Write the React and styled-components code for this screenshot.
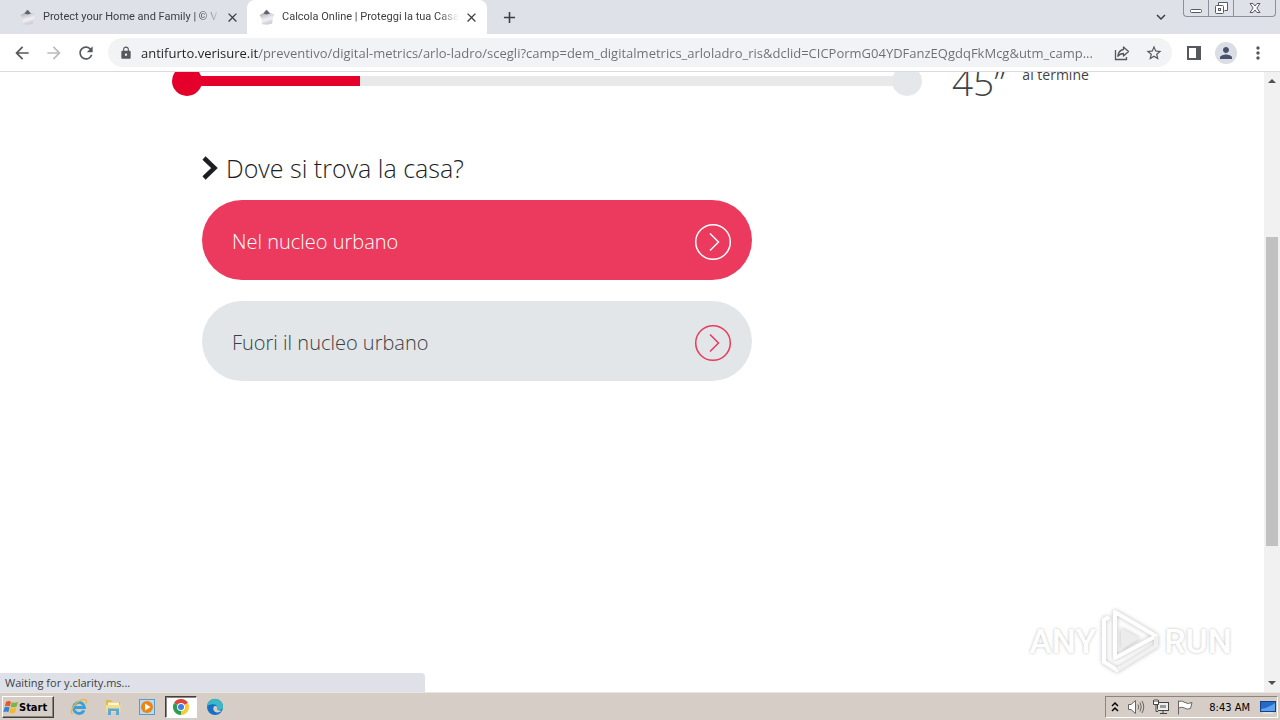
import styled, { createGlobalStyle, css } from "styled-components";
import { useState } from "react";
import {
  MdArrowBack,
  MdArrowForward,
  MdRefresh,
  MdLock,
  MdStarBorder,
  MdPerson,
  MdMoreVert,
  MdClose,
  MdAdd,
  MdExpandMore,
} from "react-icons/md";

const tabs = [
  { id: "home", title: "Protect your Home and Family | © V" },
  { id: "calcola", title: "Calcola Online | Proteggi la tua Casa" },
];

const options = ["Nel nucleo urbano", "Fuori il nucleo urbano"];

const StarLogo = () => (
  <svg width="16" height="16" viewBox="0 0 16 16" aria-hidden="true">
    <defs>
      <linearGradient id="star" x1="0" y1="0" x2="0.3" y2="1">
        <stop offset="0" stopColor="#96969f" />
        <stop offset="0.45" stopColor="#cfcfd6" />
        <stop offset="0.75" stopColor="#f2f2f5" />
        <stop offset="1" stopColor="#d2d2d8" />
      </linearGradient>
    </defs>
    <path
      d="M7.500 1.500 10.500 4.500 14.500 6 13 10 12.500 14 8 15 3.500 14.500 3.500 10 1.500 6.500 5 4.500Z"
      fill="url(#star)"
      stroke="url(#star)"
      strokeWidth="1.500"
      strokeLinejoin="round"
    />
    <path d="M7.500 1 11 4.500 7.500 5.500 4.500 4.500Z" fill="#62626f" />
  </svg>
);

const ArrowCircle = () => (
  <svg width="38" height="38" viewBox="0 0 38 38" fill="none" stroke="currentColor" aria-hidden="true">
    <circle cx="19" cy="19" r="17.300" strokeWidth="1.500" />
    <path d="M16 10.500 24.500 19 16 27.500" strokeWidth="1.500" />
  </svg>
);

const WindowButtons = () => (
  <SCWindowButtons>
    <button type="button" aria-label="Minimize">
      <svg width="12" height="14" viewBox="0 0 12 14" fill="none" stroke="#555a64">
        <rect x="0.500" y="8.500" width="11" height="3" rx="1" fill="#fff" />
      </svg>
    </button>
    <button type="button" aria-label="Restore">
      <svg width="13" height="14" viewBox="0 0 13 14" fill="none" stroke="#555a64">
        <path d="M3.500 4V1.500H12.500V9.500H9.500" fill="#fff" />
        <rect x="0.500" y="4.500" width="8" height="8" rx="1" fill="#fff" />
        <rect x="3.500" y="7.500" width="2" height="2" />
      </svg>
    </button>
    <button type="button" aria-label="Close">
      <svg width="12" height="12" viewBox="0 0 12 12" stroke="#555a64">
        <path
          d="M1 1.500H4L6 4 8 1.500H11L7.800 6 11 10.500H8L6 8 4 10.500H1L4.200 6Z"
          fill="#fff"
        />
      </svg>
    </button>
  </SCWindowButtons>
);

const Browser = () => {
  const [active, setActive] = useState("calcola");
  const [url, setUrl] = useState(
    "antifurto.verisure.it/preventivo/digital-metrics/arlo-ladro/scegli?camp=dem_digitalmetrics_arloladro_ris&dclid=CICPormG04YDFanzEQgdqFkMcg&utm_camp..."
  );

  return (
    <header>
      <SCTabStrip>
        {tabs.map((tab) => (
          <SCTab key={tab.id} $active={tab.id === active}>
            <button type="button" className="title" onClick={() => setActive(tab.id)}>
              <StarLogo />
              <span>{tab.title}</span>
            </button>
            <button type="button" className="close" aria-label="Close tab">
              <MdClose size={15} />
            </button>
          </SCTab>
        ))}
        <SCStripButton type="button" aria-label="New tab">
          <MdAdd size={19} />
        </SCStripButton>
        <SCStripEnd>
          <SCStripButton type="button" aria-label="Search tabs">
            <MdExpandMore size={18} />
          </SCStripButton>
          <WindowButtons />
        </SCStripEnd>
      </SCTabStrip>
      <SCToolbar>
        <SCIconButton type="button" aria-label="Back">
          <MdArrowBack size={20} />
        </SCIconButton>
        <SCIconButton type="button" aria-label="Forward" $faded>
          <MdArrowForward size={20} />
        </SCIconButton>
        <SCIconButton type="button" aria-label="Reload">
          <MdRefresh size={20} />
        </SCIconButton>
        <SCAddress>
          <MdLock size={14} />
          <input
            aria-label="Address"
            value={url}
            onChange={(e) => setUrl(e.target.value)}
            spellCheck="false"
          />
          <SCIconButton type="button" aria-label="Share">
            <svg width="16" height="16" viewBox="0 0 16 16" fill="none" stroke="currentColor" strokeWidth="1.300">
              <path d="M1.500 5V14.500H12.500V12" />
              <path d="M9.500 2 14.500 6.500 9.500 11V8.500C7 8.500 5.200 9.300 3.800 11.300 4.200 7.500 6 5 9.500 4.500Z" strokeLinejoin="round" />
            </svg>
          </SCIconButton>
          <SCIconButton type="button" aria-label="Bookmark">
            <MdStarBorder size={18} />
          </SCIconButton>
        </SCAddress>
        <SCIconButton type="button" aria-label="Side panel">
          <svg width="14" height="14" viewBox="0 0 14 14">
            <path d="M0 0H14V14H0Z M2 2V12H9V2Z" fill="currentColor" fillRule="evenodd" />
          </svg>
        </SCIconButton>
        <SCIconButton type="button" aria-label="Profile">
          <SCAvatar>
            <MdPerson size={18} />
          </SCAvatar>
        </SCIconButton>
        <SCIconButton type="button" aria-label="Menu">
          <MdMoreVert size={20} />
        </SCIconButton>
      </SCToolbar>
    </header>
  );
};

const Quiz = () => {
  const [selected, setSelected] = useState(0);

  return (
    <SCQuiz>
      <div className="top">
        <SCProgress>
          <i className="dot done" />
          <i className="bar" />
          <i className="dot" />
        </SCProgress>
        <SCTimer>
          <strong>45”</strong>
          <span>al termine</span>
        </SCTimer>
      </div>
      <div className="question">
        <h1>
          <svg width="16" height="24" viewBox="0 0 16 24" fill="none" aria-hidden="true">
            <path d="M2 2 12.500 12 2 22" stroke="#1d1e24" strokeWidth="4.500" />
          </svg>
          Dove si trova la casa?
        </h1>
        {options.map((option, i) => (
          <SCOption key={option} type="button" $selected={i === selected} onClick={() => setSelected(i)}>
            {option}
            <ArrowCircle />
          </SCOption>
        ))}
      </div>
    </SCQuiz>
  );
};

const Watermark = () => (
  <SCWatermark>
    <span>ANY</span>
    <svg width="60" height="66" viewBox="0 0 60 66" fill="none" aria-hidden="true">
      <path d="M9 9 4 12V54L17 62 21 59" stroke="#fff" strokeWidth="4" />
      <path d="M15 4V50L56 28Z" stroke="#fff" strokeWidth="4" strokeLinejoin="round" />
      <path d="M21 20V42L40 30Z" fill="#ececec" />
      <path d="M17 62 56 38V28" stroke="#f1f1f1" strokeWidth="4" />
    </svg>
    <span>RUN</span>
  </SCWatermark>
);

const StartFlag = () => (
  <svg width="16" height="15" viewBox="0 0 16 15" aria-hidden="true">
    <path d="M3 2Q5.500 0 8 1.800L6.800 6.500Q4.500 5 1.800 6.600Z" fill="#e8562a" />
    <path d="M8.800 2.200Q11.500 3.600 15 1.800L13.700 6.500Q10.500 8 7.600 6.900Z" fill="#7fb53c" />
    <path d="M1.500 7.600Q4 6 6.600 7.500L5.300 12.200Q3 10.800 0.300 12.300Z" fill="#3b7fd0" />
    <path d="M7.400 7.900Q10.500 9.300 13.400 7.600L12.100 12.400Q9 14 6.100 12.600Z" fill="#f5b92c" />
  </svg>
);

const Taskbar = () => (
  <SCTaskbar>
    <SCStart type="button">
      <StartFlag />
      Start
    </SCStart>
    <SCTask type="button" aria-label="Internet Explorer">
      <svg width="18" height="18" viewBox="0 0 18 18" fill="none">
        <path d="M14 12.300A5.500 5.500 0 1 1 14.500 9.500H5" stroke="#3aa0dc" strokeWidth="2.800" />
        <path d="M2.500 16C-1 13.500 5 4 12 1.800 16 .6 17.500 2.500 15.800 5.500" stroke="#e6b93b" strokeWidth="1.300" />
      </svg>
    </SCTask>
    <SCTask type="button" aria-label="Explorer">
      <svg width="18" height="18" viewBox="0 0 18 18">
        <path d="M2 2H7L8 4H16V13H2Z" fill="#dfb852" />
        <path d="M4 4.500H15V8H4Z" fill="#fff6cf" />
        <path d="M2 7H16.500V14H2Z" fill="#f4dd8c" />
        <path d="M4 17V10.500H15V17H12V13H7V17Z" fill="#5aa9d8" />
      </svg>
    </SCTask>
    <SCTask type="button" aria-label="Media Player">
      <svg width="18" height="18" viewBox="0 0 18 18">
        <rect x="1.500" y="1.500" width="15" height="15" fill="#b9daf0" stroke="#5a9cc9" />
        <circle cx="9" cy="9" r="6" fill="#ee8414" />
        <path d="M7 5.500 12.500 9 7 12.500Z" fill="#fff" />
      </svg>
    </SCTask>
    <SCTask type="button" aria-label="Chrome" $active>
      <svg width="16" height="16" viewBox="0 0 16 16">
        <path d="M8 8 1.070 4A8 8 0 0 1 14.930 4Z" fill="#de4437" />
        <path d="M8 8 14.930 4A8 8 0 0 1 8 16Z" fill="#fbca33" />
        <path d="M8 8V16A8 8 0 0 1 1.070 4Z" fill="#2d9e4f" />
        <circle cx="8" cy="8" r="4" fill="#fff" />
        <circle cx="8" cy="8" r="3" fill="#3f7de8" />
      </svg>
    </SCTask>
    <SCTask type="button" aria-label="Edge">
      <svg width="18" height="18" viewBox="0 0 18 18">
        <circle cx="9" cy="9" r="8" fill="#1670c4" />
        <path d="M1 8.500A8 8 0 0 1 17 9C17 12 13 12.500 11 11.300 12 9 10.500 6.500 7.500 6.300 4.500 6 2 7 1 8.500Z" fill="#3cb8c4" />
        <path d="M11 11.300C12 9 10.500 7.500 8.500 8 6.500 9.500 7 13 10 14.300 12.500 15 14.500 14 15.600 12.500 14 13 12 12.500 11 11.300Z" fill="#d6cec6" />
      </svg>
    </SCTask>
    <SCTray>
      <svg width="8" height="12" viewBox="0 0 8 12" fill="none" stroke="#000" strokeWidth="1.500" aria-hidden="true">
        <path d="M1 5 4 2 7 5M1 10 4 7 7 10" />
      </svg>
      <svg width="18" height="16" viewBox="0 0 18 16" fill="none" stroke="#666" aria-hidden="true">
        <path d="M1.500 5.500H4L8.500 1.500V14.500L4 10.500H1.500Z" fill="#fff" />
        <path d="M11 5.500Q12.500 8 11 10.500M13 3.500Q15.500 8 13 12.500M15 2Q18.500 8 15 14" />
      </svg>
      <svg width="16" height="16" viewBox="0 0 16 16" fill="none" stroke="#444" aria-hidden="true">
        <rect x="4.500" y="3.500" width="11" height="8" fill="#eee" />
        <path d="M7 6H13V9H7Z" fill="#999" stroke="none" />
        <path d="M7 14.500H14M10 12V14" />
        <path d="M0.500 1V5.500H5.500V1M2 0V3M4 0V3M3 5.500V12.500H5" fill="#fff" />
      </svg>
      <svg width="16" height="16" viewBox="0 0 16 16" fill="#fff" stroke="#666" aria-hidden="true">
        <path d="M1.500 1.500V15.500M1.500 2.500Q5 1 8 3.500 11 5.500 15 3.500L13.500 9.500Q10 11 7.500 9 5 7.500 1.500 9" />
      </svg>
      <time>8:43 AM</time>
      <svg width="16" height="14" viewBox="0 0 16 14" aria-hidden="true">
        <rect x="0.500" y="1.500" width="15" height="10" fill="#2468c8" stroke="#16408a" />
        <path d="M1 9Q8 8 15 3V11H1Z" fill="#5da2ec" />
        <path d="M3 13H13" stroke="#eee" />
      </svg>
    </SCTray>
  </SCTaskbar>
);

const App = () => (
  <SCScreen>
    <GlobalStyle />
    <Browser />
    <SCViewport>
      <main>
        <Quiz />
      </main>
      <SCScrollbar>
        <svg width="8" height="4" viewBox="0 0 8 4" aria-hidden="true">
          <path d="M0 4 4 0 8 4Z" fill="#505050" />
        </svg>
        <i />
        <svg width="8" height="4" viewBox="0 0 8 4" aria-hidden="true">
          <path d="M0 0 4 4 8 0Z" fill="#505050" />
        </svg>
      </SCScrollbar>
      <SCStatus>Waiting for y.clarity.ms...</SCStatus>
      <Watermark />
    </SCViewport>
    <Taskbar />
  </SCScreen>
);

const GlobalStyle = createGlobalStyle`
  * {
    box-sizing: border-box;
  }

  body {
    margin: 0;
    font-family: "Open Sans", "Noto Sans", sans-serif;
    overflow: hidden;
  }

  button {
    margin: 0;
    padding: 0;
    border: 0;
    background: none;
    font: inherit;
    color: inherit;
  }

  svg {
    display: block;
    flex-shrink: 0;
  }
`;

const center = css`
  display: flex;
  align-items: center;
  justify-content: center;
`;

const SCScreen = styled.div`
  height: 100vh;
  display: flex;
  flex-direction: column;
  background: #fff;
`;

const SCTabStrip = styled.div`
  height: 34px;
  display: flex;
  background: #dee1e8;
  color: #3c4043;
`;

const SCTab = styled.div`
  width: 240px;
  display: flex;
  align-items: center;
  padding: 0 8px 0 12px;
  border-radius: 8px 8px 0 0;
  background: ${(props) => (props.$active ? "#fff" : "transparent")};

  &:first-child {
    width: 247px;
    padding: 0 7px 0 20px;
  }

  .title {
    flex: 1;
    min-width: 0;
    display: flex;
    align-items: center;
    gap: 7px;
    font-family: Roboto, sans-serif;
    font-size: 11px;
    line-height: 16px;
    text-align: left;
  }

  span {
    flex: 1;
    overflow: hidden;
    white-space: nowrap;
    mask-image: linear-gradient(to left, transparent, #000 20px);
  }

  .close {
    ${center}
    width: 16px;
    height: 16px;
    margin-left: 4px;
  }
`;

const SCStripButton = styled.button`
  ${center}
  width: 28px;
  height: 28px;
  margin: 3px 8px;
`;

const SCStripEnd = styled.div`
  margin-left: auto;
  display: flex;
  align-items: flex-start;
`;

const SCWindowButtons = styled.div`
  display: flex;
  height: 17px;
  margin-right: 4px;
  border: 1px solid #8b909b;
  border-top: 0;
  border-radius: 0 0 4px 4px;

  button {
    ${center}
    width: 25px;
    border-right: 1px solid #8b909b;
  }

  button:last-child {
    width: 41px;
    border-right: 0;
  }
`;

const SCToolbar = styled.div`
  height: 38px;
  display: flex;
  align-items: center;
  padding: 0 6px;
  border-bottom: 1px solid #d9dbde;
`;

const SCIconButton = styled.button`
  ${center}
  width: 32px;
  height: 28px;
  flex-shrink: 0;
  color: ${(props) => (props.$faded ? "#b9bbbe" : "#55585c")};
`;

const SCAddress = styled.div`
  flex: 1;
  min-width: 0;
  height: 29px;
  display: flex;
  align-items: center;
  margin: 0 6px;
  padding: 0 2px 0 11px;
  border-radius: 15px;
  background: #f1f3f4;
  color: #55585c;

  input {
    flex: 1;
    min-width: 0;
    margin-left: 8px;
    padding: 0;
    border: 0;
    outline: 0;
    font-family: "Open Sans", sans-serif;
    font-size: 13px;
    line-height: 20px;
    background: linear-gradient(to right, #202124 117px, #6b6f74 117px);
    background-clip: text;
    -webkit-text-fill-color: transparent;
  }
`;

const SCAvatar = styled.span`
  ${center}
  width: 22px;
  height: 22px;
  border-radius: 50%;
  background: #dadde3;
  color: #47506d;
`;

const SCViewport = styled.div`
  flex: 1;
  min-height: 0;
  position: relative;
  display: flex;

  main {
    flex: 1;
    overflow: hidden;
  }
`;

const SCQuiz = styled.div`
  max-width: 920px;
  margin: -6px auto 0;
  font-family: "Open Sans", sans-serif;
  font-weight: 300;

  .top {
    display: flex;
    align-items: flex-start;
    gap: 30px;
    height: 80px;
  }

  .question {
    max-width: 580px;
    padding-left: 30px;
    display: flex;
    flex-direction: column;
  }

  h1 {
    display: flex;
    align-items: center;
    gap: 8px;
    margin: 0 0 10px;
    font-size: 25px;
    line-height: 44px;
    font-weight: 300;
    color: #1d1e24;
  }
`;

const SCProgress = styled.div`
  flex: 1;
  display: flex;
  align-items: center;

  .dot {
    width: 30px;
    height: 30px;
    border-radius: 50%;
    background: #e5e8eb;
  }

  .done {
    background: #e4002b;
  }

  .bar {
    flex: 1;
    height: 10px;
    margin: 0 -2px;
    background: linear-gradient(to right, #e4002b 23%, #e9e9e9 23%);
  }
`;

const SCTimer = styled.div`
  width: 140px;
  display: flex;
  gap: 17px;
  color: #3f4346;
  white-space: nowrap;

  strong {
    font-size: 37px;
    line-height: 32px;
    font-weight: 300;
  }

  span {
    font-size: 14px;
    line-height: 18px;
    font-weight: 400;
  }
`;

const SCOption = styled.button`
  height: 80px;
  display: flex;
  align-items: center;
  justify-content: space-between;
  margin-bottom: 21px;
  padding: 3px 20px 0 30px;
  border-radius: 40px;
  font-size: 20px;
  line-height: 28px;
  background: ${(props) => (props.$selected ? "#eb3a5d" : "#e2e6e9")};
  color: ${(props) => (props.$selected ? "#fff" : "#3c4043")};

  svg {
    color: ${(props) => (props.$selected ? "#fff" : "#eb3a5d")};
  }
`;

const SCScrollbar = styled.div`
  width: 16px;
  display: flex;
  flex-direction: column;
  align-items: center;
  padding: 7px 0;
  background: #f1f1f1;

  i {
    width: 12px;
    height: 309px;
    margin: 154px 0 auto;
    background: #c1c1c1;
  }
`;

const SCStatus = styled.div`
  position: absolute;
  left: 0;
  bottom: 0;
  width: 425px;
  height: 19px;
  padding-left: 5px;
  border-radius: 0 4px 0 0;
  background: #dee1e8;
  color: #3c4043;
  font-size: 11px;
  line-height: 20px;
`;

const SCWatermark = styled.div`
  position: absolute;
  right: 48px;
  bottom: 18px;
  display: flex;
  align-items: center;
  gap: 4px;
  font-family: Roboto, sans-serif;
  font-size: 34px;
  line-height: 48px;
  font-weight: 500;
  color: #fff;
  text-shadow: 0 0 3px #bbb;

  svg {
    filter: drop-shadow(0 0 2px #bbb);
  }
`;

const SCTaskbar = styled.footer`
  height: 28px;
  display: flex;
  align-items: center;
  padding: 1px 2px 0;
  border-top: 1px solid #e9e5df;
  background: #d6cec6;
  font-family: "DejaVu Sans Condensed", "DejaVu Sans", sans-serif;
  font-size: 11px;
  color: #000;
`;

const SCStart = styled.button`
  height: 22px;
  display: flex;
  align-items: center;
  width: 52px;
  margin-right: 9px;
  border: 1px solid;
  border-color: #fff #404040 #404040 #fff;
  box-shadow: inset -1px -1px #8b857d;
  font-weight: 700;
`;

const SCTask = styled.button`
  ${center}
  width: 32px;
  height: 22px;
  margin-right: 2px;
  border: 1px solid transparent;

  ${(props) =>
    props.$active &&
    css`
      border-color: #404040 #fff #fff #404040;
      box-shadow: inset 1px 1px #8b857d;
      background: #fff;
    `}
`;

const SCTray = styled.div`
  height: 22px;
  display: flex;
  align-items: center;
  gap: 8px;
  margin-left: auto;
  padding: 0 1px 0 5px;
  border: 1px solid;
  border-color: #8b857d #fff #fff #8b857d;

  time {
    margin: 0 2px 0 8px;
  }
`;

export default App;
